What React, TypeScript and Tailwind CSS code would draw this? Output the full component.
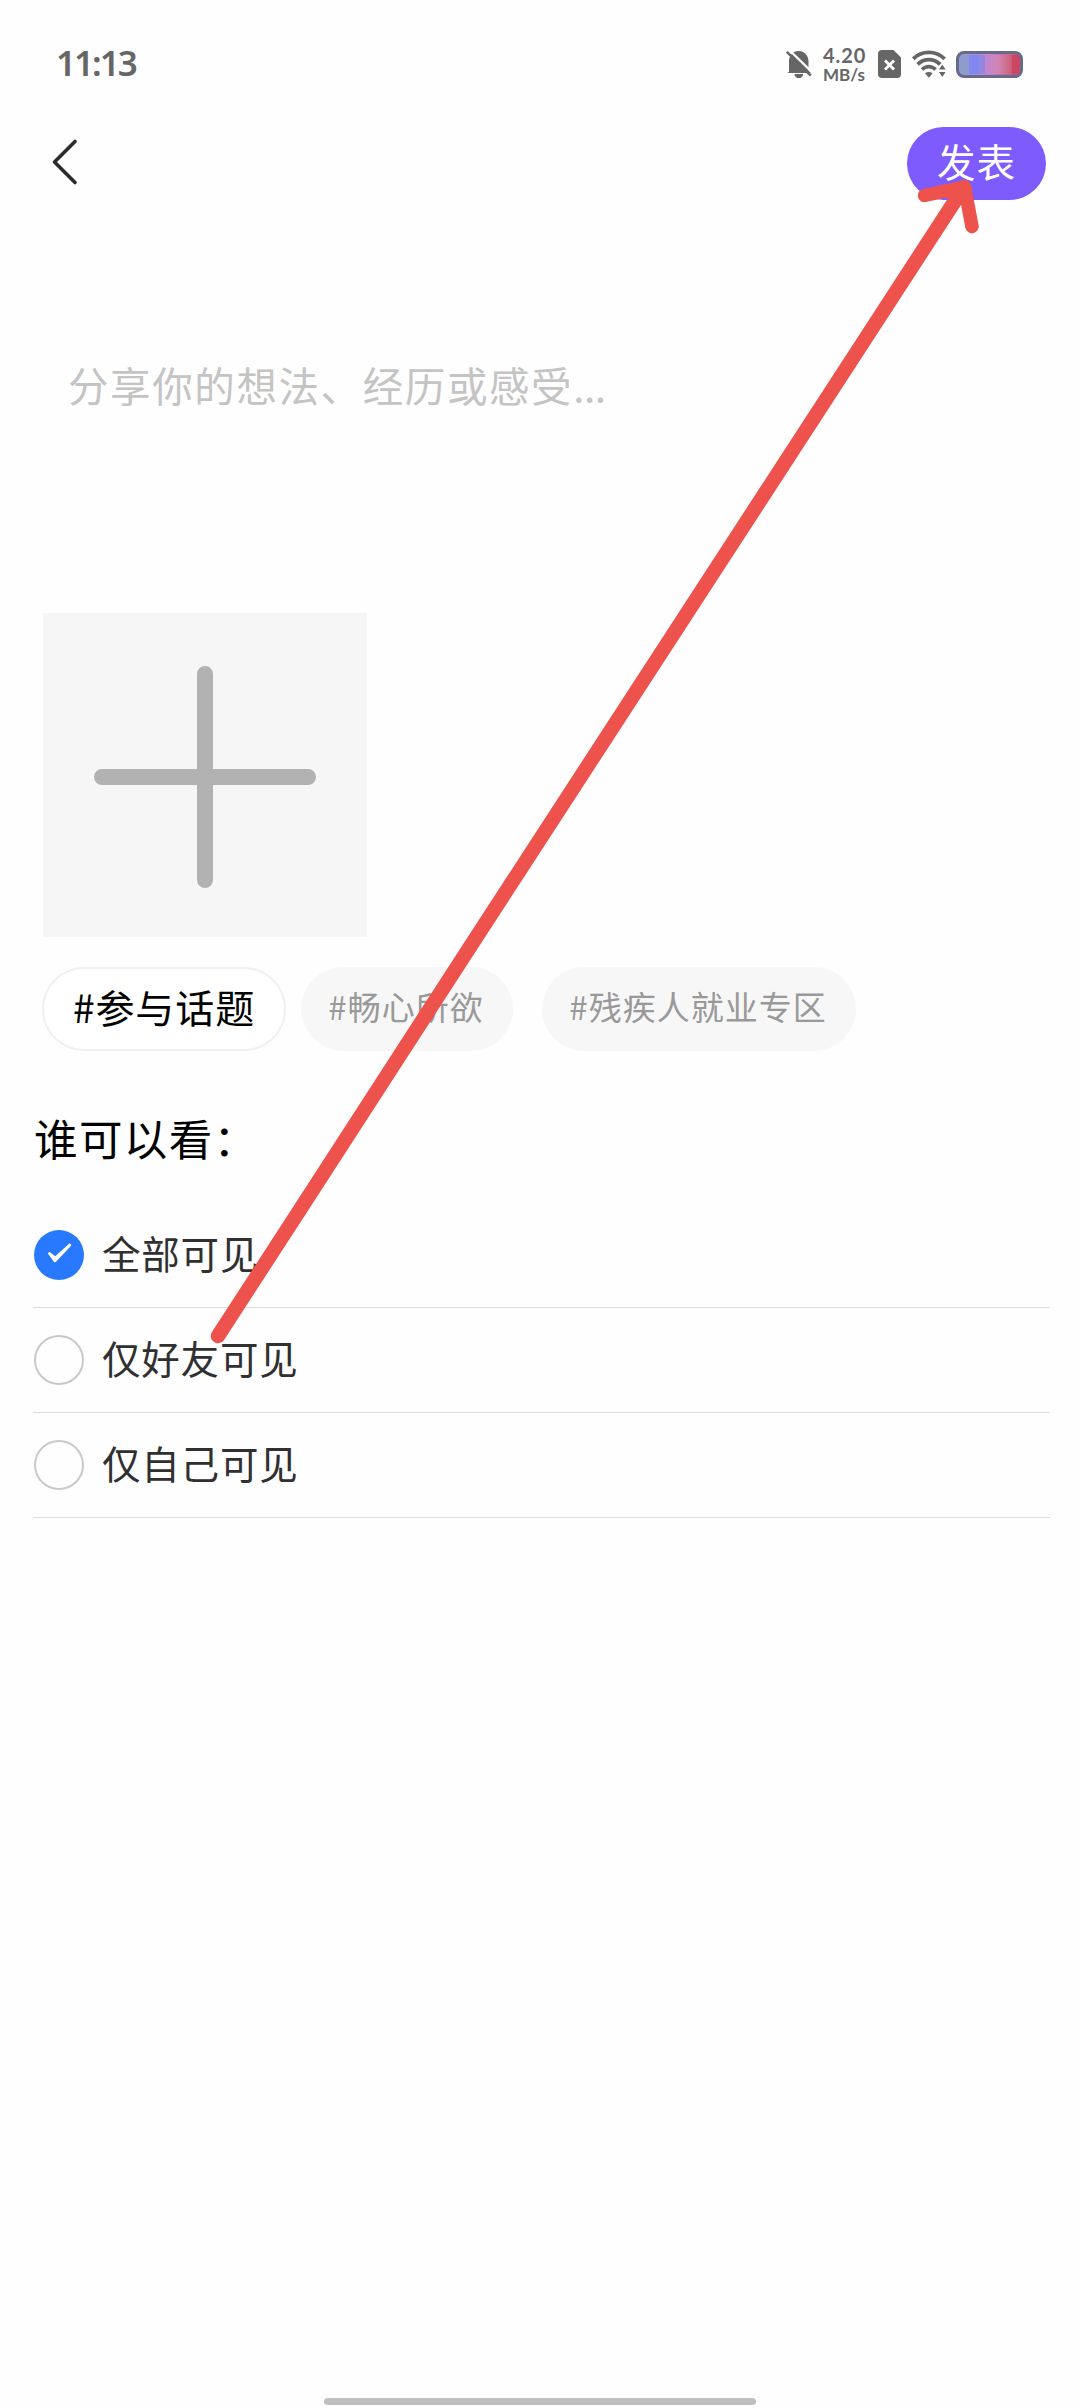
import { useState } from "react";
import clsx from "clsx";

const TOPICS = [
  { label: "#畅心所欲", width: "w-[212px]" },
  { label: "#残疾人就业专区", width: "w-[314px]" },
];

const VISIBILITY_OPTIONS = [
  { value: "all", label: "全部可见" },
  { value: "friends", label: "仅好友可见" },
  { value: "self", label: "仅自己可见" },
];

function StatusBar() {
  return (
    <div className="flex h-[127px] items-start justify-between pt-[38px] pr-[57px] pl-[56px] text-[#666]">
      <span className="font-['Noto_Sans'] text-[35px] leading-[50px] font-semibold tracking-[-2px]">11:13</span>
      <div className="flex h-[52px] items-center">
        {/* Muted bell */}
        <svg className="h-[28px] w-[26px]" viewBox="0 0 26 28" fill="none">
          <path d="M3 22V11.5C3 5.5 7 1 12.600 1S22.500 5.500 22.500 11.500V20.500l2.500 2.500H1z" fill="#666" />
          <path d="M8.500 24h8.600a4.300 4.300 0 0 1-8.600 0z" fill="#666" />
          <path d="M3.200 0 27.500 23.600" stroke="#fefefe" strokeWidth="2.200" />
          <path d="M0.800 1.800 24.800 25.600" stroke="#666" strokeWidth="2.600" />
        </svg>
        <div className="ml-[11px] flex w-[45px] flex-col font-['Lato'] font-bold whitespace-nowrap">
          <span className="text-[20px] leading-[20px] tracking-[0.9px]">4.20</span>
          <span className="mt-px text-[17px] leading-[18px]">MB/s</span>
        </div>
        {/* SIM missing */}
        <svg className="ml-[10px] h-[28px] w-[23px]" viewBox="0 0 23 28" fill="none">
          <path d="M4 0h11.5L23 7.5V24a4 4 0 0 1-4 4H4a4 4 0 0 1-4-4V4a4 4 0 0 1 4-4z" fill="#666" />
          <path d="m7 10.500 9 9m0-9-9 9" stroke="#fefefe" strokeWidth="2.800" />
        </svg>
        {/* Wifi */}
        <svg className="ml-[11px] h-[28px] w-[34px]" viewBox="0 0 34 28" fill="none" stroke="#666">
          <path d="M1.200 8.800C9.800.2 23.800.2 32.600 8.800" strokeWidth="3.800" />
          <path d="M5.600 14.400c6.400-6.400 16-6.400 22.600 0" strokeWidth="3.800" />
          <path d="M10 19.600c4-4 9.600-4 13.600 0" strokeWidth="3.600" />
          <path d="M13 23.300q3.800-2.400 7.600 0L16.800 27.700z" fill="#666" stroke="none" />
          <path d="M27 19.500 30.300 14.500 33.600 19.500zM27 22 30.300 27 33.600 22z" fill="#666" stroke="none" />
        </svg>
        {/* Battery */}
        <div className="ml-[10px] h-[27px] w-[67px] rounded-[8px] border-[3px] border-[#686a8c] bg-linear-to-r from-[#8f9bd0] via-[#c985c9] to-[#cc4660] p-px">
          <div className="flex h-full w-full overflow-hidden rounded-[4px]">
            <div className="w-[9px] bg-[#8c9ccb]" />
            <div className="w-[10px] bg-[#8087f2]" />
            <div className="w-[6px] bg-[#9488de]" />
            <div className="grow bg-linear-to-r from-[#bf85d6] via-[#cf85b0] to-[#cc5d77]" />
            <div className="w-[7px] bg-[#cc4562]" />
          </div>
        </div>
      </div>
    </div>
  );
}

function Header() {
  return (
    <header className="flex h-[73px] items-center justify-between pr-[34px] pl-[50px]">
      <button type="button" aria-label="返回" className="pb-[3px]">
        <svg className="h-[50px] w-[30px]" viewBox="0 0 30 50" fill="none">
          <path
            d="M25 4.500 4.500 25 25 45.500"
            stroke="#2b2b2b"
            strokeWidth="3.600"
            strokeLinecap="round"
            strokeLinejoin="round"
          />
        </svg>
      </button>
      <button
        type="button"
        className="flex h-[73px] w-[139px] items-center justify-center rounded-full bg-[#7e5bfd] pb-[6px] text-[38.500px] tracking-[1px] text-white"
      >
        发表
      </button>
    </header>
  );
}

function AddPhotoTile() {
  return (
    <button type="button" aria-label="添加图片" className="ml-[43px] block h-[324px] w-[324px] bg-[#f6f6f6]">
      <svg viewBox="0 0 324 324" fill="none" stroke="#b2b2b2" strokeWidth="16" strokeLinecap="round">
        <path d="M162 61v206M59 164h206" />
      </svg>
    </button>
  );
}

function TopicChips() {
  return (
    <div className="mt-[30px] ml-[42px] flex h-[84px] items-center">
      <span className="flex h-full w-[244px] items-center justify-center rounded-full border-2 border-[#f0f0f0] bg-white pb-[5px] text-[39px] tracking-[0.9px] text-black">
        #参与话题
      </span>
      <div className="ml-[15px] flex h-full gap-[29px]">
        {TOPICS.map((topic) => (
          <span
            key={topic.label}
            className={clsx(
              "flex h-full items-center justify-center rounded-full bg-[#f7f7f7] pr-[2px] pb-[5px] text-[33px] tracking-[1px] text-[#999]",
              topic.width
            )}
          >
            {topic.label}
          </span>
        ))}
      </div>
    </div>
  );
}

interface RadioMarkProps {
  checked: boolean;
}

function RadioMark({ checked }: RadioMarkProps) {
  return (
    <span
      className={clsx(
        "flex h-[50px] w-[50px] items-center justify-center rounded-full",
        checked ? "bg-[#2979ff]" : "border-2 border-[#c8c9cc]"
      )}
    >
      {checked && (
        <svg className="h-[50px] w-[50px]" viewBox="0 0 50 50" fill="none">
          <path
            d="M15.500 23.500 21 30.800 35.800 15 21.300 28z"
            fill="white"
            stroke="white"
            strokeWidth="2.800"
            strokeLinejoin="round"
          />
        </svg>
      )}
    </span>
  );
}

// Hand-drawn pointer from the visibility list up to the publish button
function GuideArrow() {
  return (
    <svg
      className="pointer-events-none absolute top-0 left-0 h-[2408px] w-[1080px]"
      viewBox="0 0 1080 2408"
      fill="none"
      stroke="#ee524d"
      strokeLinecap="round"
      strokeLinejoin="round"
    >
      <path d="M218 1336 303 1205 468 950 964 187" strokeWidth="14.500" />
      <path d="M924.500 195.500 964.500 187 972 226.500" strokeWidth="13.500" />
    </svg>
  );
}

export default function App() {
  const [visibility, setVisibility] = useState("all");

  return (
    <div className="relative flex h-[2408px] w-[1080px] flex-col overflow-hidden bg-[#fefefe] font-['Noto_Sans_CJK_SC',sans-serif]">
      <StatusBar />
      <Header />

      <div className="h-[413px] pt-[155px] pl-[68px] text-[40.500px] leading-[60px] tracking-[1.600px] text-[#c4c4c4]">
        分享你的想法、经历或感受<span className="tracking-[-0.5px]">...</span>
      </div>

      <AddPhotoTile />
      <TopicChips />

      <h2 className="mt-[55px] ml-[34px] text-[43.500px] leading-[64px] tracking-[1.400px] text-black">谁可以看：</h2>

      <div className="mt-[33px] mr-[30px] ml-[33px]">
        {VISIBILITY_OPTIONS.map((option) => (
          <button
            key={option.value}
            type="button"
            onClick={() => setVisibility(option.value)}
            className="flex h-[105px] w-full items-center border-b-[1.500px] border-[#dcdcdc] pl-px"
          >
            <RadioMark checked={visibility === option.value} />
            <span className="ml-[18px] pb-[5px] text-[38.500px] tracking-[0.800px] text-[#303030]">
              {option.label}
            </span>
          </button>
        ))}
      </div>

      <div className="mx-auto mt-auto mb-[3px] h-[7px] w-[432px] rounded-full bg-[#c0c0c0]" />
      <GuideArrow />
    </div>
  );
}
